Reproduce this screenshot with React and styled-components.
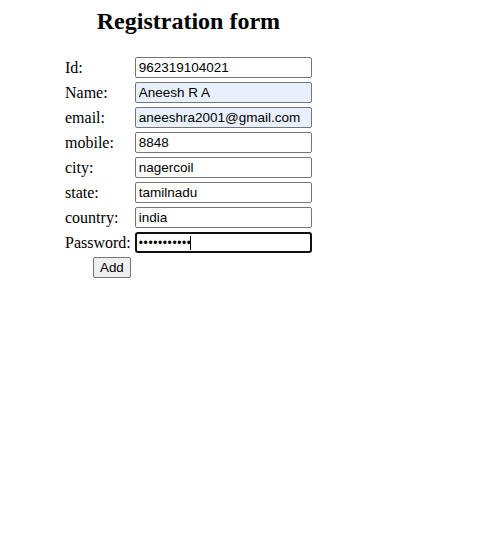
import React from "react";
import styled, { createGlobalStyle } from "styled-components";

const Global = createGlobalStyle`
  html, body { margin: 0; padding: 0; background: #fff; }
  body { margin: 8px; font-family: "Liberation Serif", "Times New Roman", serif; font-size: 16px; color: #000; }
`;

const Wrap = styled.div`
  display: inline-block;
  margin-left: 54px;
`;

const Title = styled.h2`
  margin: 0 0 19px;
  font-size: 24px;
  font-weight: bold;
  text-align: center;
  line-height: 27px;
`;

const Table = styled.table`
  border-collapse: separate;
  border-spacing: 2px;
`;

const Label = styled.td`
  padding: 1px;
  text-align: ${(p) => (p.$right ? "right" : "left")};
  white-space: nowrap;
`;

const Cell = styled.td`
  padding: 1px;
`;

const Field = styled.span`
  position: relative;
  display: inline-block;
  vertical-align: middle;
`;

const Caret = styled.span`
  position: absolute;
  left: ${(p) => p.$x}px;
  top: 4px;
  width: 1px;
  height: 14px;
  background: #000;
`;

const Input = styled.input`
  display: block;
  box-sizing: border-box;
  width: 177px;
  height: 21px;
  margin: 0;
  padding: 1px 3px;
  font-family: "Liberation Sans", Arial, sans-serif;
  font-size: 13.5px;
  color: #000;
  background: ${(p) => (p.$filled ? "#e8f0fe" : "#fff")};
  border: 1px solid #767676;
  border-radius: 2px;
  outline: none;
  ${(p) =>
    p.$focused &&
    `border: 2px solid #101010; border-radius: 3px; padding: 0 2px; font-size: 12px; letter-spacing: 0.6px;`}
`;

const Button = styled.button`
  box-sizing: border-box;
  height: 21px;
  margin: 0;
  padding: 1px 6px;
  font-family: "Liberation Sans", Arial, sans-serif;
  font-size: 13.33px;
  color: #000;
  background: #efefef;
  border: 1px solid #767676;
  border-radius: 2px;
`;

const rows = [
  ["Id:", "962319104021"],
  ["Name:", "Aneesh R A", true],
  ["email:", "aneeshra2001@gmail.com", true],
  ["mobile:", "8848"],
  ["city:", "nagercoil"],
  ["state:", "tamilnadu"],
  ["country:", "india"],
];

export default function App() {
  return (
    <>
      <Global />
      <Wrap>
        <Title>Registration form</Title>
        <Table>
          <tbody>
            {rows.map(([l, v, f]) => (
              <tr key={l}>
                <Label>{l}</Label>
                <Cell>
                  <Field>
                    <Input type="text" defaultValue={v} $filled={f} readOnly />
                  </Field>
                </Cell>
              </tr>
            ))}
            <tr>
              <Label>Password:</Label>
              <Cell>
                <Field>
                  <Input type="password" defaultValue="aneesh12345" $focused readOnly />
                  <Caret $x={55} />
                </Field>
              </Cell>
            </tr>
            <tr>
              <Label $right>
                <Button type="button">Add</Button>
              </Label>
              <Cell />
            </tr>
          </tbody>
        </Table>
      </Wrap>
    </>
  );
}
